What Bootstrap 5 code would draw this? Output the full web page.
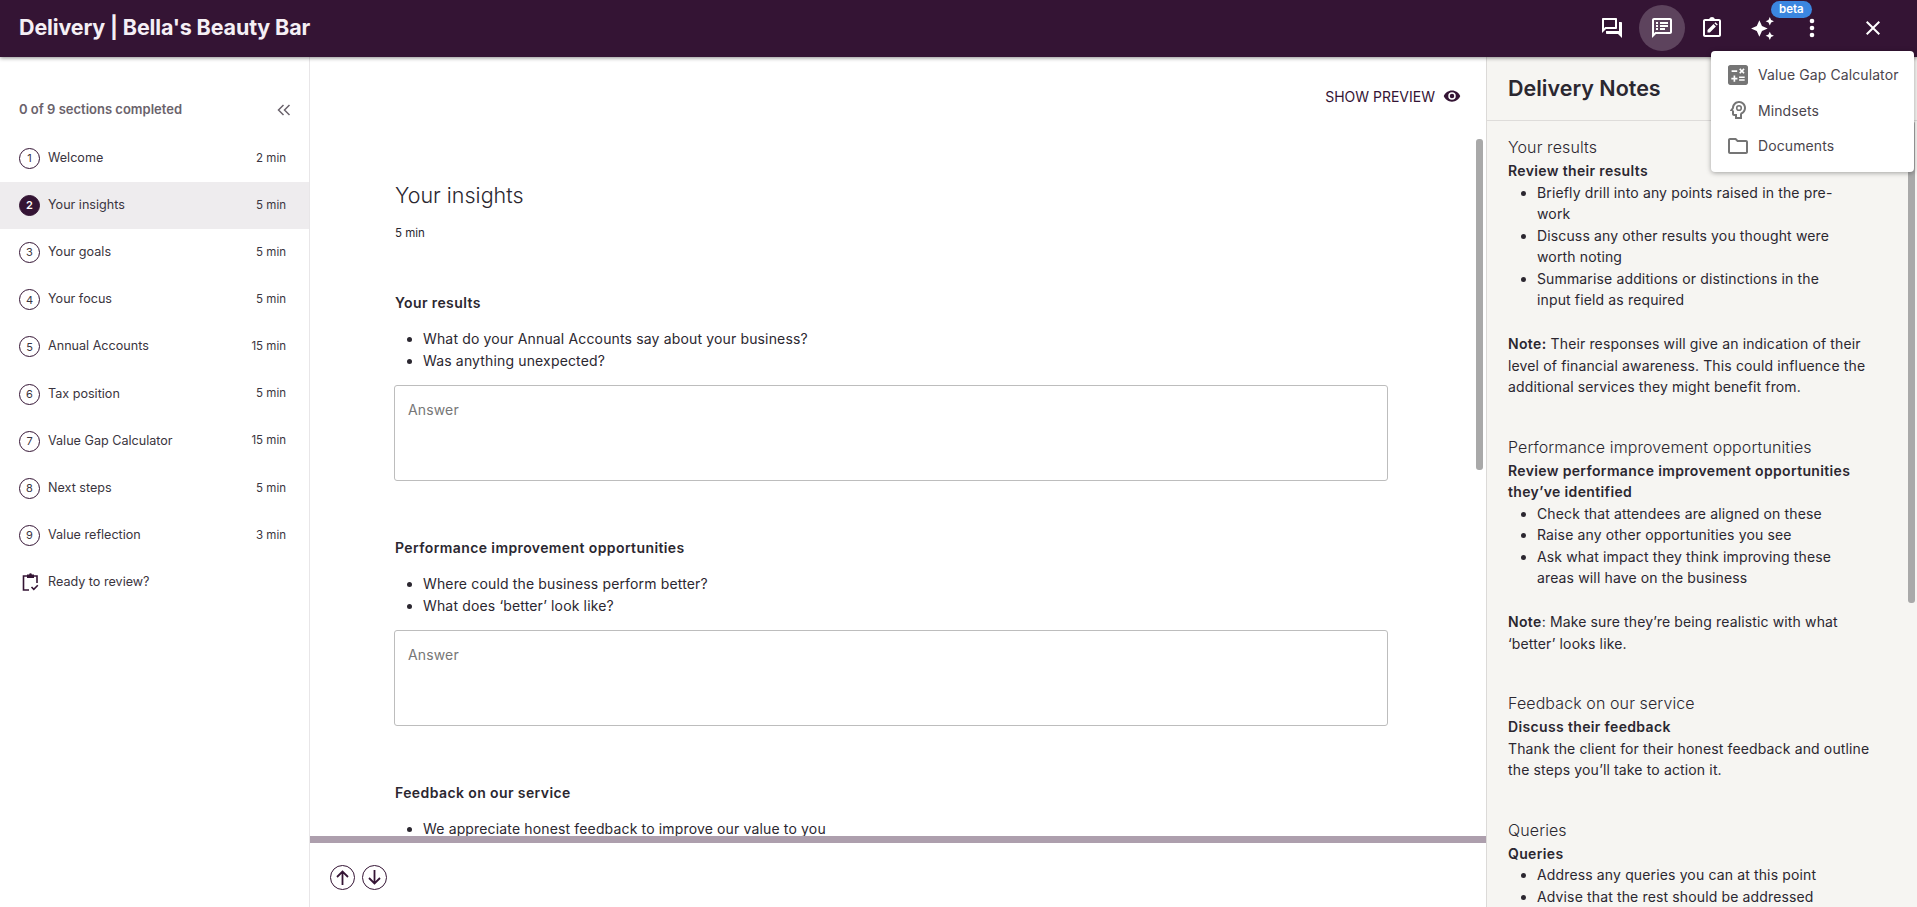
<!DOCTYPE html>
<html lang="en">
<head>
<meta charset="utf-8">
<title>Delivery | Bella's Beauty Bar</title>
<link href="https://cdn.jsdelivr.net/npm/bootstrap@5.3.0/dist/css/bootstrap.min.css" rel="stylesheet">
<style>
html,body{height:100%;overflow:hidden}
body{font-family:"Inter","Noto Sans","Liberation Sans",sans-serif;color:#2b2730;background:#fff}
.app-top{height:57px;background:#341434;box-shadow:0 1px 4px rgba(0,0,0,.45);position:relative;z-index:5;padding:0 21px 1px 19px}
.app-title{font-size:21.5px;font-weight:700;color:#f5eff5;letter-spacing:-.15px;margin-top:-1px}
.top-btn{width:46px;height:46px;border-radius:50%;color:#fff;flex:none}
.top-btn.on{background:#5d435d}
.beta-tag{position:absolute;top:-4px;left:32px;background:#3b86e0;color:#fff;font-size:11.5px;font-weight:600;line-height:17px;padding:0 8px;border-radius:9px}
.shell{height:850px}
.side-col{width:310px;border-right:1px solid #e8e6e8;flex:none}
.side-head{height:78px;padding:27px 17px 0 19px}
.side-head span{font-size:13px;font-weight:600;color:#6a626b}
.side-row{height:47.1px;padding:0 23px 0 19px;font-size:12.6px;color:#3a3540}
.side-row.on{background:#eeecee}
.num-ring{width:21px;height:21px;border:1px solid #341434;border-radius:50%;font-size:11px;display:flex;align-items:center;justify-content:center;margin-right:8px;flex:none;color:#3a3540}
.side-row.on .num-ring{background:#341434;color:#fff;font-weight:600}
.mins{margin-left:auto;font-size:11.5px;color:#3a3540}
.review-ico{width:17px;height:18px;margin:0 9px 0 3px;flex:none}
.main-col{width:1176px;flex:none}
.main-scroll{height:779px;overflow:hidden;padding:0 0 0 84px;position:relative}
.prev-row{height:78px;padding-right:25px;font-size:14px;color:#341434}
.sec-title{font-size:21.5px;font-weight:300;margin:45px 0 0;line-height:30px;color:#2b2730;padding-left:1px}
.sec-min{font-size:11.5px;margin:15px 0 51px;line-height:16px;padding-left:1px}
.q-head{font-size:14px;font-weight:600;line-height:21px;margin:0 0 15px;letter-spacing:.4px;padding-left:1px}
.q-list{font-size:14px;line-height:21.5px;padding-left:29px;margin:0 0 14px;letter-spacing:.15px}
.answer-box{width:994px;height:96px;border:1px solid #bdbdbd;border-radius:3px;padding:13px;font-size:14px;color:#777;margin-bottom:56px;resize:none;display:block;box-shadow:none;letter-spacing:.15px}
.answer-box::placeholder{color:#777}
.fake-bar{position:absolute;left:1166px;top:82px;width:7px;height:331px;background:#a9a9a9;border-radius:3px}
.bottom-bar{height:71px;border-top:7px solid #ad9fad;padding:4px 0 0 20px;gap:7px}
.round-btn{width:25px;height:25px;color:#341434;display:block}
.notes-col{flex:1;background:#f6f5f2;border-left:1px solid #dcdad8;position:relative;overflow:hidden;min-width:0}
.notes-head{height:64px;border-bottom:1px solid #dedcda;padding:0 21px 1px;font-size:21.5px;font-weight:600;color:#2b2730}
.notes-body{padding:13px 42px 0 21px;font-size:14px;line-height:21.5px;color:#2b2730;letter-spacing:.14px}
.notes-body h6{font-size:16px;font-weight:300;line-height:26px;margin:0;letter-spacing:.1px}
.notes-body ul{padding:0 26px 0 29px;margin:0}
.notes-body p{margin:0}
.notes-body b{font-weight:600;letter-spacing:.35px}
.gap-big{height:22.5px}
.gap-sec{height:36px}
.notes-bar{position:absolute;right:2px;top:64px;width:7px;height:482px;background:#a9a9a9;border-radius:3px}
.tool-menu{position:absolute;top:51px;right:3px;width:203px;height:121px;background:#fff;border-radius:4px;box-shadow:0 1px 5px rgba(0,0,0,.35);z-index:10;padding:6px 0 0 17px}
.tool-row{height:35.5px;font-size:14px;color:#4a454d;gap:10px;letter-spacing:.1px}
.tool-row svg{flex:none;width:20px;height:20px;color:#757575}
</style>
</head>
<body>
<header class="app-top d-flex align-items-center">
  <div class="app-title me-auto">Delivery | Bella's Beauty Bar</div>
  <div class="d-flex align-items-center" style="gap:4px">
    <div class="top-btn d-flex align-items-center justify-content-center">
      <svg width="24" height="24" viewBox="0 0 24 24" fill="currentColor"><path d="M15 4v7H5.170L4 12.170V4h11m1-2H3c-.55 0-1 .45-1 1v14l4-4h10c.55 0 1-.45 1-1V3c0-.55-.45-1-1-1zm5 4h-2v9H6v2c0 .55.45 1 1 1h11l4 4V7c0-.55-.45-1-1-1z"/></svg>
    </div>
    <div class="top-btn on d-flex align-items-center justify-content-center">
      <svg width="24" height="24" viewBox="0 0 24 24" fill="currentColor"><path d="M20 2H4c-1.100 0-1.990.9-1.990 2L2 22l4-4h14c1.100 0 2-.9 2-2V4c0-1.100-.9-2-2-2zm0 14H5.170L4 17.170V4h16v12zM6 12h2v2H6zm0-3h2v2H6zm0-3h2v2H6zm4 6h5v2h-5zm0-3h8v2h-8zm0-3h8v2h-8z"/></svg>
    </div>
    <div class="top-btn d-flex align-items-center justify-content-center">
      <svg width="24" height="24" viewBox="0 0 24 24" fill="currentColor"><path d="M19 3h-4.180C14.400 1.840 13.300 1 12 1s-2.400.84-2.820 2H5c-1.100 0-2 .9-2 2v14c0 1.100.9 2 2 2h14c1.100 0 2-.9 2-2V5c0-1.100-.9-2-2-2zm0 16H5V5h14v14z"/><path d="M7.500 16.500v-2.400l6-6 2.400 2.400-6 6zM14.400 7.200l1-1 2.400 2.400-1 1z"/></svg>
    </div>
    <div class="top-btn d-flex align-items-center justify-content-center position-relative">
      <svg width="25" height="25" viewBox="0 0 24 24" fill="currentColor"><path d="M19 9l1.250-2.750L23 5l-2.750-1.250L19 1l-1.250 2.750L15 5l2.750 1.250zm-7.500.5L9 4 6.500 9.500 1 12l5.500 2.500L9 20l2.500-5.500L17 12l-5.500-2.500zM19 15l-1.250 2.750L15 19l2.750 1.250L19 23l1.250-2.750L23 19l-2.750-1.250z"/></svg>
      <span class="beta-tag">beta</span>
    </div>
    <div class="top-btn d-flex align-items-center justify-content-center">
      <svg width="24" height="24" viewBox="0 0 24 24" fill="currentColor"><circle cx="12" cy="5" r="2.300"/><circle cx="12" cy="12" r="2.300"/><circle cx="12" cy="19" r="2.300"/></svg>
    </div>
    <div class="top-btn d-flex align-items-center justify-content-center" style="margin-left:11px">
      <svg width="24" height="24" viewBox="0 0 24 24" fill="currentColor"><path d="M19 6.410L17.590 5 12 10.590 6.410 5 5 6.410 10.590 12 5 17.590 6.410 19 12 13.410 17.590 19 19 17.590 13.410 12z"/></svg>
    </div>
  </div>
</header>
<div class="shell d-flex">
  <aside class="side-col">
    <div class="side-head d-flex align-items-center justify-content-between">
      <span>0 of 9 sections completed</span>
      <svg width="16" height="16" viewBox="0 0 16 16" fill="none" stroke="#6a626b" stroke-width="1.500"><path d="M7.500 3L2.500 8l5 5M13.500 3L8.500 8l5 5"/></svg>
    </div>
    <div class="side-row d-flex align-items-center"><span class="num-ring">1</span>Welcome<span class="mins">2 min</span></div>
    <div class="side-row on d-flex align-items-center"><span class="num-ring">2</span>Your insights<span class="mins">5 min</span></div>
    <div class="side-row d-flex align-items-center"><span class="num-ring">3</span>Your goals<span class="mins">5 min</span></div>
    <div class="side-row d-flex align-items-center"><span class="num-ring">4</span>Your focus<span class="mins">5 min</span></div>
    <div class="side-row d-flex align-items-center"><span class="num-ring">5</span>Annual Accounts<span class="mins">15 min</span></div>
    <div class="side-row d-flex align-items-center"><span class="num-ring">6</span>Tax position<span class="mins">5 min</span></div>
    <div class="side-row d-flex align-items-center"><span class="num-ring">7</span>Value Gap Calculator<span class="mins">15 min</span></div>
    <div class="side-row d-flex align-items-center"><span class="num-ring">8</span>Next steps<span class="mins">5 min</span></div>
    <div class="side-row d-flex align-items-center"><span class="num-ring">9</span>Value reflection<span class="mins">3 min</span></div>
    <div class="side-row d-flex align-items-center">
      <svg class="review-ico" viewBox="0 0 17 18" fill="none" stroke="#341434" stroke-width="1.600"><path d="M5 3H1.500v14H7"/><path d="M11.500 3H15v7"/><path d="M5 1.500h2.200a1.300 1.300 0 0 1 2.600 0H12V5H5z" fill="#341434" stroke="none"/><path d="M9.500 14l2.300 2.300 4-4"/></svg>Ready to review?
    </div>
  </aside>
  <main class="main-col d-flex flex-column">
    <div class="main-scroll">
      <div class="prev-row d-flex align-items-center justify-content-end">
        <span class="me-2">SHOW PREVIEW</span>
        <svg width="18" height="18" viewBox="0 0 24 24" fill="#341434"><path fill-rule="evenodd" d="M12 4.500C7 4.500 2.700 7.600 1 12c1.700 4.400 6 7.500 11 7.500s9.300-3.100 11-7.500c-1.700-4.400-6-7.500-11-7.500zM12 17a5 5 0 1 1 0-10 5 5 0 0 1 0 10zm0-8a3 3 0 1 0 0 6 3 3 0 0 0 0-6z"/></svg>
      </div>
      <div class="fake-bar"></div>
      <h1 class="sec-title">Your insights</h1>
      <div class="sec-min">5 min</div>
      <p class="q-head">Your results</p>
      <ul class="q-list"><li>What do your Annual Accounts say about your business?</li><li>Was anything unexpected?</li></ul>
      <textarea class="form-control answer-box" placeholder="Answer"></textarea>
      <p class="q-head">Performance improvement opportunities</p>
      <ul class="q-list"><li>Where could the business perform better?</li><li>What does ‘better’ look like?</li></ul>
      <textarea class="form-control answer-box" placeholder="Answer"></textarea>
      <p class="q-head">Feedback on our service</p>
      <ul class="q-list"><li>We appreciate honest feedback to improve our value to you</li></ul>
    </div>
    <div class="bottom-bar d-flex align-items-center">
      <svg class="round-btn" viewBox="0 0 25 25" fill="none" stroke="currentColor"><circle cx="12.500" cy="12.500" r="12"/><path d="M12.500 20V6.500M7 12l5.500-5.500L18 12" stroke-width="1.800"/></svg>
      <svg class="round-btn" viewBox="0 0 25 25" fill="none" stroke="currentColor"><circle cx="12.500" cy="12.500" r="12"/><path d="M12.500 5v13.500M7 13l5.500 5.500L18 13" stroke-width="1.800"/></svg>
    </div>
  </main>
  <section class="notes-col">
    <div class="notes-head d-flex align-items-center">Delivery Notes</div>
    <div class="notes-body">
      <h6>Your results</h6>
      <p><b>Review their results</b></p>
      <ul><li>Briefly drill into any points raised in the pre-work</li><li>Discuss any other results you thought were worth noting</li><li>Summarise additions or distinctions in the input field as required</li></ul>
      <div class="gap-big"></div>
      <p><b>Note:</b> Their responses will give an indication of their level of financial awareness. This could influence the additional services they might benefit from.</p>
      <div class="gap-sec"></div>
      <h6>Performance improvement opportunities</h6>
      <p><b>Review performance improvement opportunities they’ve identified</b></p>
      <ul><li>Check that attendees are aligned on these</li><li>Raise any other opportunities you see</li><li>Ask what impact they think improving these areas will have on the business</li></ul>
      <div class="gap-big"></div>
      <p><b>Note</b>: Make sure they’re being realistic with what ‘better’ looks like.</p>
      <div class="gap-sec"></div>
      <h6>Feedback on our service</h6>
      <p><b>Discuss their feedback</b></p>
      <p>Thank the client for their honest feedback and outline the steps you’ll take to action it.</p>
      <div class="gap-sec"></div>
      <h6>Queries</h6>
      <p><b>Queries</b></p>
      <ul><li>Address any queries you can at this point</li><li>Advise that the rest should be addressed</li></ul>
    </div>
    <div class="notes-bar"></div>
  </section>
</div>
<nav class="tool-menu">
  <div class="tool-row d-flex align-items-center">
    <svg viewBox="3 3 18 18" fill="currentColor"><path d="M19 3H5c-1.100 0-2 .9-2 2v14c0 1.100.9 2 2 2h14c1.100 0 2-.9 2-2V5c0-1.100-.9-2-2-2zm-5.970 4.060L14.090 6l1.410 1.410L16.910 6l1.060 1.060-1.410 1.410 1.410 1.410-1.060 1.060-1.410-1.400-1.410 1.410-1.060-1.060 1.410-1.410-1.410-1.420zm-6.780.66h5v1.500h-5V7.720zM11.500 16h-2v2H8v-2H6v-1.500h2v-2h1.500v2h2V16zm6.500 1.250h-5v-1.500h5v1.500zm0-2.500h-5v-1.500h5v1.500z"/></svg>
    Value Gap Calculator</div>
  <div class="tool-row d-flex align-items-center">
    <svg viewBox="2 2 20 20" fill="currentColor"><path d="M13 3C9.250 3 6.200 5.940 6.020 9.640L4.100 12.200c-.25.33-.01.8.4.8H6v3c0 1.100.9 2 2 2h1v3h7v-4.680c2.360-1.120 4-3.530 4-6.320 0-3.870-3.130-7-7-7zm1 12.970V19h-3v-3H8v-3.500H6.700l1.310-2.510C8.120 7.220 10.330 5 13 5c2.760 0 5 2.240 5 5 0 2.090-1.290 3.880-3.110 4.620z"/><circle cx="13" cy="10" r="2.300" fill="none" stroke="currentColor" stroke-width="1.600"/></svg>
    Mindsets</div>
  <div class="tool-row d-flex align-items-center">
    <svg viewBox="2 2 20 20" fill="currentColor"><path d="M9.170 6l2 2H20v10H4V6h5.170M10 4H4c-1.100 0-1.990.9-1.990 2L2 18c0 1.100.9 2 2 2h16c1.100 0 2-.9 2-2V8c0-1.100-.9-2-2-2h-8l-2-2z"/></svg>
    Documents</div>
</nav>
</body>
</html>
